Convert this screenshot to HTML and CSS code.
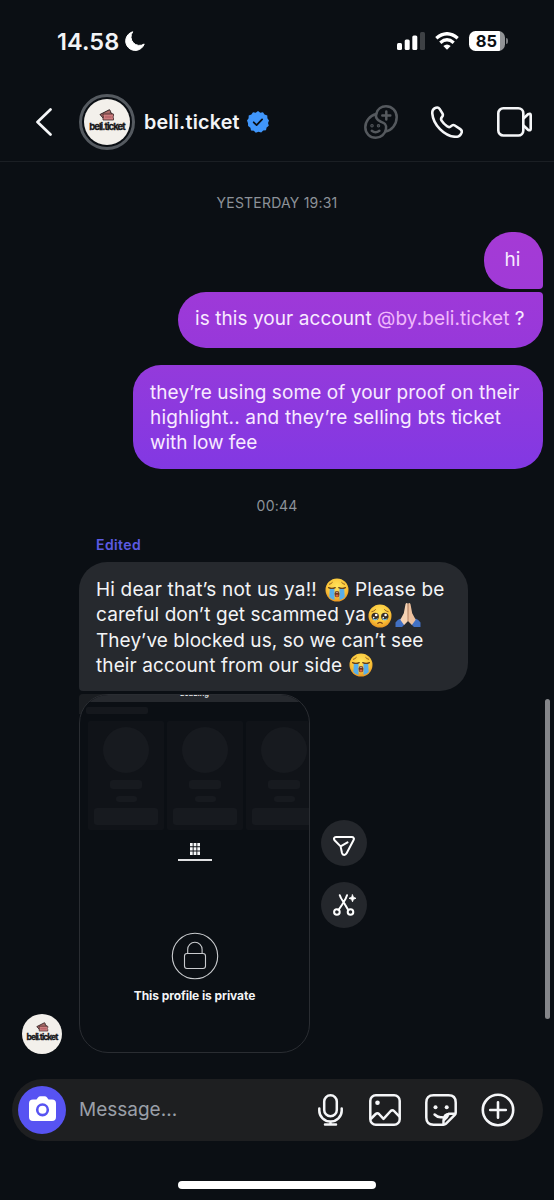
FILE: index.html
```html
<!DOCTYPE html>
<html lang="en">
<head>
<meta charset="utf-8">
<meta name="viewport" content="width=device-width, initial-scale=1">
<title>beli.ticket</title>
<link rel="stylesheet" href="styles.css">
</head>
<body>
<svg class="defs" aria-hidden="true">
  <defs>
    <radialGradient id="face" cx="50%" cy="35%" r="65%">
      <stop offset="0" stop-color="#ffe45c"/><stop offset=".65" stop-color="#fbc53a"/><stop offset="1" stop-color="#e89622"/>
    </radialGradient>
    <symbol id="cry" viewBox="0 0 24 24">
      <circle cx="12" cy="12" r="11.5" fill="url(#face)"/>
      <path d="M4 6.4Q6 6 7.6 4.2M20 6.4Q18 6 16.400 4.200" fill="none" stroke="#9a641c" stroke-width="1"/>
      <path d="M4.800 10.500h4.700v11.400q-3-.4-5.200-2.900zM14.500 10.500h4.700l.5 8.500q-2.200 2.500-5.200 2.900z" fill="#57aeea"/>
      <path d="M3.600 9.600q3.200 1.700 6.600 0M13.800 9.600q3.400 1.700 6.600 0" fill="none" stroke="#684019" stroke-width="1.300" stroke-linecap="round"/>
      <rect x="9.700" y="13" width="4.600" height="6.300" rx="2.200" fill="#70371b"/>
      <path d="M10.500 14.600q1.500-1.500 3 0z" fill="#fff"/>
      <ellipse cx="12" cy="17.700" rx="1.500" ry="1.100" fill="#e46448"/>
    </symbol>
    <symbol id="plead" viewBox="0 0 24 24">
      <circle cx="12" cy="12" r="11.500" fill="url(#face)"/>
      <path d="M3.400 7.800Q6 7.400 7.800 5.300M20.600 7.800Q18 7.400 16.200 5.300" fill="none" stroke="#9a641c" stroke-width="1"/>
      <circle cx="7.200" cy="12.400" r="3.700" fill="#3b3026"/><circle cx="16.800" cy="12.400" r="3.700" fill="#3b3026"/>
      <path d="M4.300 13.800q3 2.800 5.800 0-.5 2.600-2.900 2.600t-2.900-2.600M13.900 13.800q3 2.800 5.800 0-.5 2.600-2.900 2.600t-2.900-2.600" fill="#79c4e8"/>
      <g fill="#fff"><circle cx="8.200" cy="11" r="1.300"/><circle cx="17.600" cy="11" r="1.300"/><circle cx="5.700" cy="13.600" r=".8"/><circle cx="15.300" cy="13.600" r=".8"/></g>
      <path d="M9.800 19.300q2.200-1.800 4.400 0" fill="none" stroke="#77401a" stroke-width="1.200" stroke-linecap="round"/>
    </symbol>
    <symbol id="pray" viewBox="0 0 26 26">
      <path d="M.5 25v-4.500q2-3 5-4l4 6-2.500 2.500zM25.500 25v-4.500q-2-3-5-4l-4 6 2.500 2.500z" fill="#4271c4"/>
      <path d="M12.900 1.700q-1.600-1.700-2.400.5L8.800 11.300 5.300 17.800l3.800 5.300 3.900-4.100z" fill="#f5d2b3"/>
      <path d="M13.100 1.700q1.600-1.700 2.400.5l1.700 9.100 3.500 6.500-3.800 5.300L13 19z" fill="#edc09d"/>
      <path d="M13 2v17" stroke="#a97456" stroke-width=".8"/>
    </symbol>
    <symbol id="tickets" viewBox="0 0 16 12">
      <path d="M1 5.500 10.500.7l1 1.600-.2 1.200 1.400.5 1 2L5 10z" fill="#ac6d6a" stroke="#2b1d20" stroke-width="1"/>
      <path d="M4 5h10.500v2q-1.200 1 0 2v2H4V9q1.200-1 0-2z" fill="#ce7d7e" stroke="#402628" stroke-width=".8"/>
      <path d="M6 7.200h6.500v1.600H6z" fill="#b8656b"/>
    </symbol>
  </defs>
</svg>
<div class="phone">
  <div class="status">
    <span class="time">14.58</span>
    <svg class="moon" viewBox="0 0 20 20"><path d="M7.700.8A9.500 9.500 0 1 0 19.200 13 A8.500 8.500 0 0 1 7.700.8z" fill="#fff" stroke="#fff" stroke-width="1" stroke-linejoin="round"/></svg>
    <svg class="signal" viewBox="0 0 28 18" fill="#fff"><rect y="11" width="5" height="7" rx="1.500"/><rect x="7.700" y="7.500" width="5" height="10.500" rx="1.500"/><rect x="15.300" y="3.600" width="5" height="14.400" rx="1.500"/><rect x="23" width="5" height="18" rx="1.500" fill="#3e4145"/></svg>
    <svg class="wifi" viewBox="0 0 24 18" fill="none" stroke="#fff" stroke-width="3.300"><path d="M1.300 6.200q10.700-9 21.400 0M5.300 10.700q6.700-5.800 13.400 0"/><path d="M12 17.800 8.300 14q3.700-3 7.400 0z" fill="#fff" stroke="none"/></svg>
    <div class="battery"><b>85</b></div><i class="nub"></i>
  </div>
  <header class="top">
    <svg class="back" viewBox="0 0 16 28" fill="none" stroke="#f5f6f8" stroke-width="2.700" stroke-linecap="round" stroke-linejoin="round"><path d="M14.500 1.500 1.500 14l13 12.500"/></svg>
    <div class="ring"><div class="avatar"><svg class="tix"><use href="#tickets"/></svg><span>beli.ticket</span></div></div>
    <h1>beli.ticket</h1>
    <svg class="verified" viewBox="0 0 22 22"><path d="M11 0l2.300 1.700L16 1.200l1.500 2.400 2.800.8.100 2.800L22 9.500 21 12l.8 2.700-2.200 1.800-.6 2.800-2.800.3-2 2-2.700-.8-2.700.9-2-2-2.800-.3-.6-2.700-2.300-1.800L1 12.200 0 9.600l1.600-2.400.1-2.800 2.700-.8L6 1.200l2.700.5z" fill="#4096fb"/><path d="m6.700 11.300 2.900 2.800 5.500-5.700" fill="none" stroke="#0b0f14" stroke-width="1.800" stroke-linecap="round" stroke-linejoin="round"/></svg>
    <svg class="people" viewBox="0 0 34 34" fill="none" stroke="#55595e" stroke-width="2.500" stroke-linecap="round"><path d="M12.200 9C13.300 4 17.400 1.300 22 1.300c6.100 0 10.700 4.700 10.700 10.700 0 7.700-5.200 13.400-11 14.400"/><path d="M12.200 9C5.700 10.500 1.300 16.300 1.300 22.300c0 6.100 4.600 10.400 10.400 10.400 5.300 0 9.500-3.700 10.300-8.800.8-5.200-2.200-6-5.500-7.400-3.500-1.500-5-4.500-4.300-7.500z"/><path d="M22.300 6.500v8M18.300 10.500h8M7.800 25.700q3.700 3 7.600 0"/><circle cx="8" cy="20.800" r=".5" fill="#55595e"/><circle cx="14.500" cy="20.800" r=".5" fill="#55595e"/></svg>
    <svg class="call" viewBox="0 0 32 32" fill="none" stroke="#f5f6f8" stroke-width="2.600" stroke-linejoin="round"><path d="M5 1.700C2.600 2.500 1 4.500 1.300 7.600 2.200 18.800 13.200 29.900 24.200 30.800c3 .2 5.500-1.700 6.400-4.200.5-1.500-.1-2.700-1.300-3.500l-5.500-3.600c-1.400-.9-2.600-.5-3.700.6-1.300 1.300-2.400 1.400-4 .2-2.400-1.700-4.200-3.600-5.500-5.700-.9-1.400-.7-2.400.4-3.600 1-1.200 1.200-2.300.4-3.600L8.600 2.900C7.700 1.500 6.500 1.200 5 1.700z"/></svg>
    <svg class="video" viewBox="0 0 35 30" fill="none" stroke="#f5f6f8" stroke-width="2.600" stroke-linejoin="round"><rect x="1.300" y="1.300" width="25" height="27.200" rx="5"/><path d="M26.500 11.500 31 7.200q2.500-1.200 2.700.8v14q-.2 2-2.700.8l-4.500-4.300"/></svg>
  </header>
  <main class="thread">
    <time class="stamp first">YESTERDAY 19:31</time>
    <p class="mine hi"><span class="ln">hi</span></p>
    <p class="mine ask"><span class="ln q1">is this your account <em>@by.beli.ticket</em> ?</span></p>
    <p class="mine proof"><span class="ln p1">they’re using some of your proof on their</span><span class="ln p2">highlight.. and they’re selling bts ticket</span><span class="ln p3">with low fee</span></p>
    <time class="stamp second">00:44</time>
    <span class="edited">Edited</span>
    <p class="theirs"><span class="ln t1">Hi dear that’s not us ya!! <svg class="emo" role="img" aria-label="😭"><use href="#cry"/></svg> Please be</span><span class="ln t2">careful don’t get scammed ya<svg class="emo" role="img" aria-label="🥹"><use href="#plead"/></svg><svg class="emo hands" role="img" aria-label="🙏🏻"><use href="#pray"/></svg></span><span class="ln t3">They’ve blocked us, so we can’t see</span><span class="ln t4">their account from our side <svg class="emo" role="img" aria-label="😭"><use href="#cry"/></svg></span></p>
    <div class="media">
      <div class="avatar small"><svg class="tix"><use href="#tickets"/></svg><span>beli.ticket</span></div>
      <div class="frame">
        <div class="shot">
          <div class="loading"><span>Loading</span></div>
          <div class="heading"></div>
          <div class="cards">
            <div class="card"><i></i><i></i><i></i><i></i></div>
            <div class="card"><i></i><i></i><i></i><i></i></div>
            <div class="card"><i></i><i></i><i></i><i></i></div>
          </div>
          <div class="tab"><svg viewBox="0 0 10 12" fill="#f5f6f8"><path d="M0 0h2.700v3.300H0zM3.600 0h2.800v3.300H3.600zM7.300 0H10v3.300H7.300zM0 4.300h2.700v3.300H0zM3.600 4.300h2.800v3.300H3.600zM7.300 4.300H10v3.300H7.300zM0 8.600h2.700V12H0zM3.600 8.600h2.800V12H3.600zM7.300 8.600H10V12H7.300z"/></svg></div>
          <svg class="lock" viewBox="0 0 48 48" fill="none" stroke="#c9cbce" stroke-width="1.100"><circle cx="24" cy="24" r="22.700"/><rect x="13.500" y="21.500" width="21" height="15" rx="2.500"/><path d="M16.700 21.500v-4a7.200 7.200 0 0 1 14.400 0v4"/></svg>
          <div class="private">This profile is private</div>
        </div>
      </div>
      <div class="actions">
        <button aria-label="Share"><svg viewBox="0 0 22 20" fill="none" stroke="#fff" stroke-width="2" stroke-linejoin="round" stroke-linecap="round"><path d="M3 1h15.800c1.700 0 2.700 1.500 1.800 3l-7 13.300c-1.200 2.200-4 2.200-4.600-.3L7.600 10.400 1.800 4.500C.3 3 1 1 3 1zM7.600 10.400l6.900-4"/></svg></button>
        <button aria-label="Cut out"><svg viewBox="0 0 23 22" fill="none" stroke="#fff" stroke-width="2" stroke-linecap="round"><path d="M6.800 1.200c1.200 4.200 3.800 6.300 5.200 9.300l3.200 5.400M14 1.200c-1.200 4.200-3 6.300-4.800 9.300L5.500 16"/><circle cx="3.900" cy="18" r="2.800"/><circle cx="17.500" cy="18" r="2.800"/><path d="m19.500.8 1 2.500 2.500 1-2.500 1-1 2.500-1-2.500-2.500-1 2.500-1z" fill="#fff" stroke="#fff" stroke-width=".8"/></svg></button>
      </div>
    </div>
    <i class="scroll"></i>
  </main>
  <footer class="composer">
    <div class="camera"><svg viewBox="0 0 27 26"><path d="M4 3.500h3.500L9 1.500Q9.800.2 11.500.2h4Q17.200.2 18 1.500l1.500 2H23q4 0 4 4V21q0 4-4 4H4q-4 0-4-4V7.500q0-4 4-4z" fill="#fff"/><circle cx="13.500" cy="13.800" r="5.300" fill="none" stroke="#5753f2" stroke-width="2.600"/></svg></div>
    <span class="hint">Message...</span>
    <svg class="mic" viewBox="0 0 25 32" fill="none" stroke="#f5f6f8" stroke-width="2.500" stroke-linecap="round"><rect x="6.200" y="1.300" width="12.600" height="21" rx="6.300"/><path d="M1.300 14.500v2.200a11.200 10.800 0 0 0 22.400 0v-2.200M12.500 27.500v3M7 30.600h11"/></svg>
    <svg class="gallery" viewBox="0 0 32 32" fill="none" stroke="#f5f6f8" stroke-width="2.500" stroke-linejoin="round"><rect x="1.300" y="1.300" width="29.400" height="29.400" rx="5.500"/><path d="m1.700 25 5-5q1.700-1.500 3.300 0l4.500 4.800L21.700 17q1.700-1.700 3.300 0l5.500 5.600"/><circle cx="8.500" cy="8.700" r="2.300" fill="#f5f6f8" stroke="none"/></svg>
    <svg class="sticker" viewBox="0 0 32 32" fill="none" stroke="#f5f6f8" stroke-width="2.500" stroke-linejoin="round" stroke-linecap="round"><path d="M18.500 30.700H8.500q-7.200 0-7.200-7.200v-15q0-7.200 7.200-7.200h15q7.200 0 7.200 7.200v10.200q0 1.300-.9 2.200l-9 9q-.9.800-2.300.8zM18.500 30.200v-3.500q0-7 7-7h4.700M23.800 19.700q-1.300 3.500-5 6.500M9.600 20.500q3.500 3.500 7.500 2.700"/><g fill="#f5f6f8" stroke="none"><circle cx="10.500" cy="13.300" r="2"/><circle cx="21.700" cy="13.300" r="2"/></g></svg>
    <svg class="plus" viewBox="0 0 34 34" fill="none" stroke="#f5f6f8" stroke-width="2.600" stroke-linecap="round"><circle cx="17" cy="17" r="15.200"/><path d="M17 9.200v15.600M9.200 17h15.600"/></svg>
  </footer>
  <div class="home"></div>
</div>
</body>
</html>
```

FILE: styles.css
```css
* { box-sizing: border-box; }
body { margin: 0; background: #0b0f14; color: #f3f4f6; font-family: Inter, sans-serif; }
svg { display: block; flex: none; }
.defs { position: absolute; width: 0; height: 0; }
.phone { width: 554px; height: 1200px; overflow: hidden; display: flex; flex-direction: column; background: #0b0f14; }

.status { height: 82px; display: flex; align-items: center; padding-left: 57px; flex: none; }
.time { font-size: 23.500px; font-weight: 600; letter-spacing: .1px; width: 68px; }
.moon { width: 20px; height: 20px; }
.signal { width: 28px; height: 18px; margin-left: 252px; }
.wifi { width: 24px; height: 18px; margin-left: 10px; }
.battery { width: 36px; height: 20px; margin-left: 10px; border-radius: 6.500px; background: linear-gradient(90deg, #fff 31px, #919396 31px); color: #0b0f14; font-size: 16.500px; line-height: 20px; text-align: center; padding-right: 1px; }
.battery b { font-weight: 700; }
.nub { width: 2px; height: 6px; margin-left: 1px; border-radius: 0 3px 3px 0; background: #77797d; }

.top { height: 80px; display: flex; align-items: center; padding: 1px 0 0 36px; border-bottom: 1px solid #1b1f24; flex: none; }
.back { width: 16px; height: 28px; }
.ring { width: 56px; height: 56px; margin-left: 27px; border: 3px solid #555a60; border-radius: 50%; display: flex; align-items: center; justify-content: center; flex: none; }
.avatar { width: 46px; height: 46px; border-radius: 50%; background: #f3f0eb; color: #17171a; display: flex; flex-direction: column; align-items: center; flex: none; }
.avatar .tix { width: 16px; height: 12px; margin-top: 10px; }
.avatar span { font: 700 9.500px/12px Inter, sans-serif; letter-spacing: -.950px; white-space: nowrap; -webkit-text-stroke: .3px #17171a; }
.top h1 { margin: 0 0 0 9px; font-size: 19.750px; font-weight: 600; line-height: 24px; width: 103px; white-space: nowrap; letter-spacing: .180px; }
.verified { width: 22px; height: 22px; }
.people { width: 34px; height: 34px; margin-left: 95px; }
.call { width: 32px; height: 32px; margin-left: 33px; }
.video { width: 35px; height: 30px; margin-left: 34px; }

.thread { position: relative; height: 917px; display: flex; flex-direction: column; flex: none; }
.stamp { display: block; align-self: center; font-size: 14px; line-height: 18px; color: #8d9299; letter-spacing: .2px; }
.first { margin-top: 32px; }
.mine { margin: 0 11px 0 0; align-self: flex-end; border-radius: 28px; color: #f8eaff; padding: 15px 17px 14px; flex: none; }
.hi { width: 59.500px; height: 57px; margin-top: 20px; padding-left: 21px; border-bottom-right-radius: 4px; background: linear-gradient(#a53ad5, #a03ad7); }
.ask { width: 365px; height: 56px; margin-top: 3px; padding-top: 14px; border-top-right-radius: 4px; background: linear-gradient(#9e39d8, #9738da); }
.ask em { font-style: normal; color: #f0b8fb; }
.proof { width: 410px; height: 104px; margin-top: 17px; background: linear-gradient(#943adb, #8238e3); }
.ln { display: block; font-size: 19px; line-height: 25px; height: 25px; white-space: nowrap; }
.q1 { letter-spacing: .070px; }
.p1 { letter-spacing: .080px; }
.p2 { letter-spacing: .170px; }
.p3 { letter-spacing: -.080px; }
.second { margin-top: 28px; }
.edited { margin: 21px 0 0 96px; font-size: 14px; line-height: 18px; font-weight: 600; letter-spacing: .4px; color: #5b5be3; }
.theirs { margin: 8px 0 0 79px; width: 389px; height: 129px; padding: 15px 17px; border-radius: 28px 28px 28px 4px; background: #26292e; flex: none; }
.theirs .ln { height: 25.300px; line-height: 25.300px; }
.t1 { letter-spacing: .180px; }
.t2 { letter-spacing: .100px; }
.t3 { letter-spacing: .060px; }
.t4 { letter-spacing: .110px; }
.emo { display: inline-block; width: 24px; height: 24px; vertical-align: -5px; margin: -3px 0; position: relative; top: -2.500px; }
.t1 .emo { margin-left: 2px; margin-right: 1px; }
.t4 .emo { margin-left: 1px; }
.t2 .emo { margin-left: 2px; top: -1.500px; }
.t2 .hands { width: 26px; height: 26px; margin-left: 3px; top: -1px; }

.media { margin-top: 3px; padding-left: 22px; display: flex; height: 360px; flex: none; }
.small { width: 40px; height: 40px; align-self: flex-end; }
.small .tix { width: 13px; height: 10px; margin-top: 8px; }
.small span { font-size: 8.500px; line-height: 11px; letter-spacing: -.950px; }
.frame { width: 231px; height: 359px; margin-left: 17px; background: linear-gradient(#1b1e22, #1b1e22) 0 0 / 29px 20px no-repeat; border-radius: 4px 0 0; }
.shot { width: 231px; height: 359px; border: 1px solid #2a2d32; border-radius: 29px; background: #0b0f14; overflow: hidden; display: flex; flex-direction: column; align-items: center; }
.loading { width: 229px; height: 7px; background: #26292e; text-align: center; overflow: hidden; flex: none; }
.loading span { display: block; margin-top: -8px; font-size: 7.500px; line-height: 13px; font-weight: 600; }
.heading { align-self: flex-start; width: 62px; height: 7px; margin: 5px 0 0 6px; border-radius: 2px; background: #15181d; flex: none; }
.cards { align-self: flex-start; margin: 7px 0 0 8px; display: flex; gap: 3px; height: 109px; flex: none; }
.card { width: 76px; background: #101318; border-radius: 2px; display: flex; flex-direction: column; align-items: center; flex: none; }
.card i { background: #171a1f; flex: none; border-radius: 3px; }
.card i:nth-child(1) { width: 46px; height: 46px; border-radius: 50%; margin-top: 6px; }
.card i:nth-child(2) { width: 32px; height: 9px; margin-top: 7px; }
.card i:nth-child(3) { width: 21px; height: 6px; margin-top: 7px; }
.card i:nth-child(4) { width: 64px; height: 17px; margin-top: 6px; }
.tab { width: 34px; height: 18px; margin-top: 13px; border-bottom: 2px solid #dfe0e2; display: flex; justify-content: center; flex: none; }
.tab svg { width: 10px; height: 12px; }
.lock { width: 48px; height: 48px; margin-top: 71px; }
.private { margin-top: 8px; font-size: 12px; line-height: 16px; font-weight: 700; letter-spacing: -.080px; white-space: nowrap; }
.actions { margin: 126px 0 0 11px; display: flex; flex-direction: column; gap: 16px; }
.actions button { width: 46px; height: 46px; padding: 0; border: 0; border-radius: 50%; background: #24272c; display: flex; align-items: center; justify-content: center; }
.actions button:first-child svg { width: 22px; height: 20px; margin-top: 5px; }
.actions button:last-child svg { width: 23px; height: 22px; }
.scroll { position: absolute; left: 545px; top: 537px; width: 5px; height: 320px; border-radius: 3px; background: #85868a; }

.composer { width: 531px; height: 62px; margin-left: 12px; padding-left: 6px; border-radius: 31px; background: #1e1f21; display: flex; align-items: center; flex: none; }
.camera { width: 48px; height: 48px; border-radius: 50%; background: #5753f2; display: flex; align-items: center; justify-content: center; flex: none; }
.camera svg { width: 27px; height: 26px; margin-top: -2px; }
.hint { width: 239px; margin: -1px 0 0 13px; font-size: 19px; line-height: 25px; color: #9a9fa8; }
.mic { width: 25px; height: 32px; }
.gallery { width: 32px; height: 32px; margin-left: 25.500px; }
.sticker { width: 32px; height: 32px; margin-left: 24.500px; }
.plus { width: 34px; height: 34px; margin-left: 23.500px; }
.home { width: 198px; height: 8px; margin: 40px 0 0 178px; border-radius: 4px; background: #fff; flex: none; }
```
